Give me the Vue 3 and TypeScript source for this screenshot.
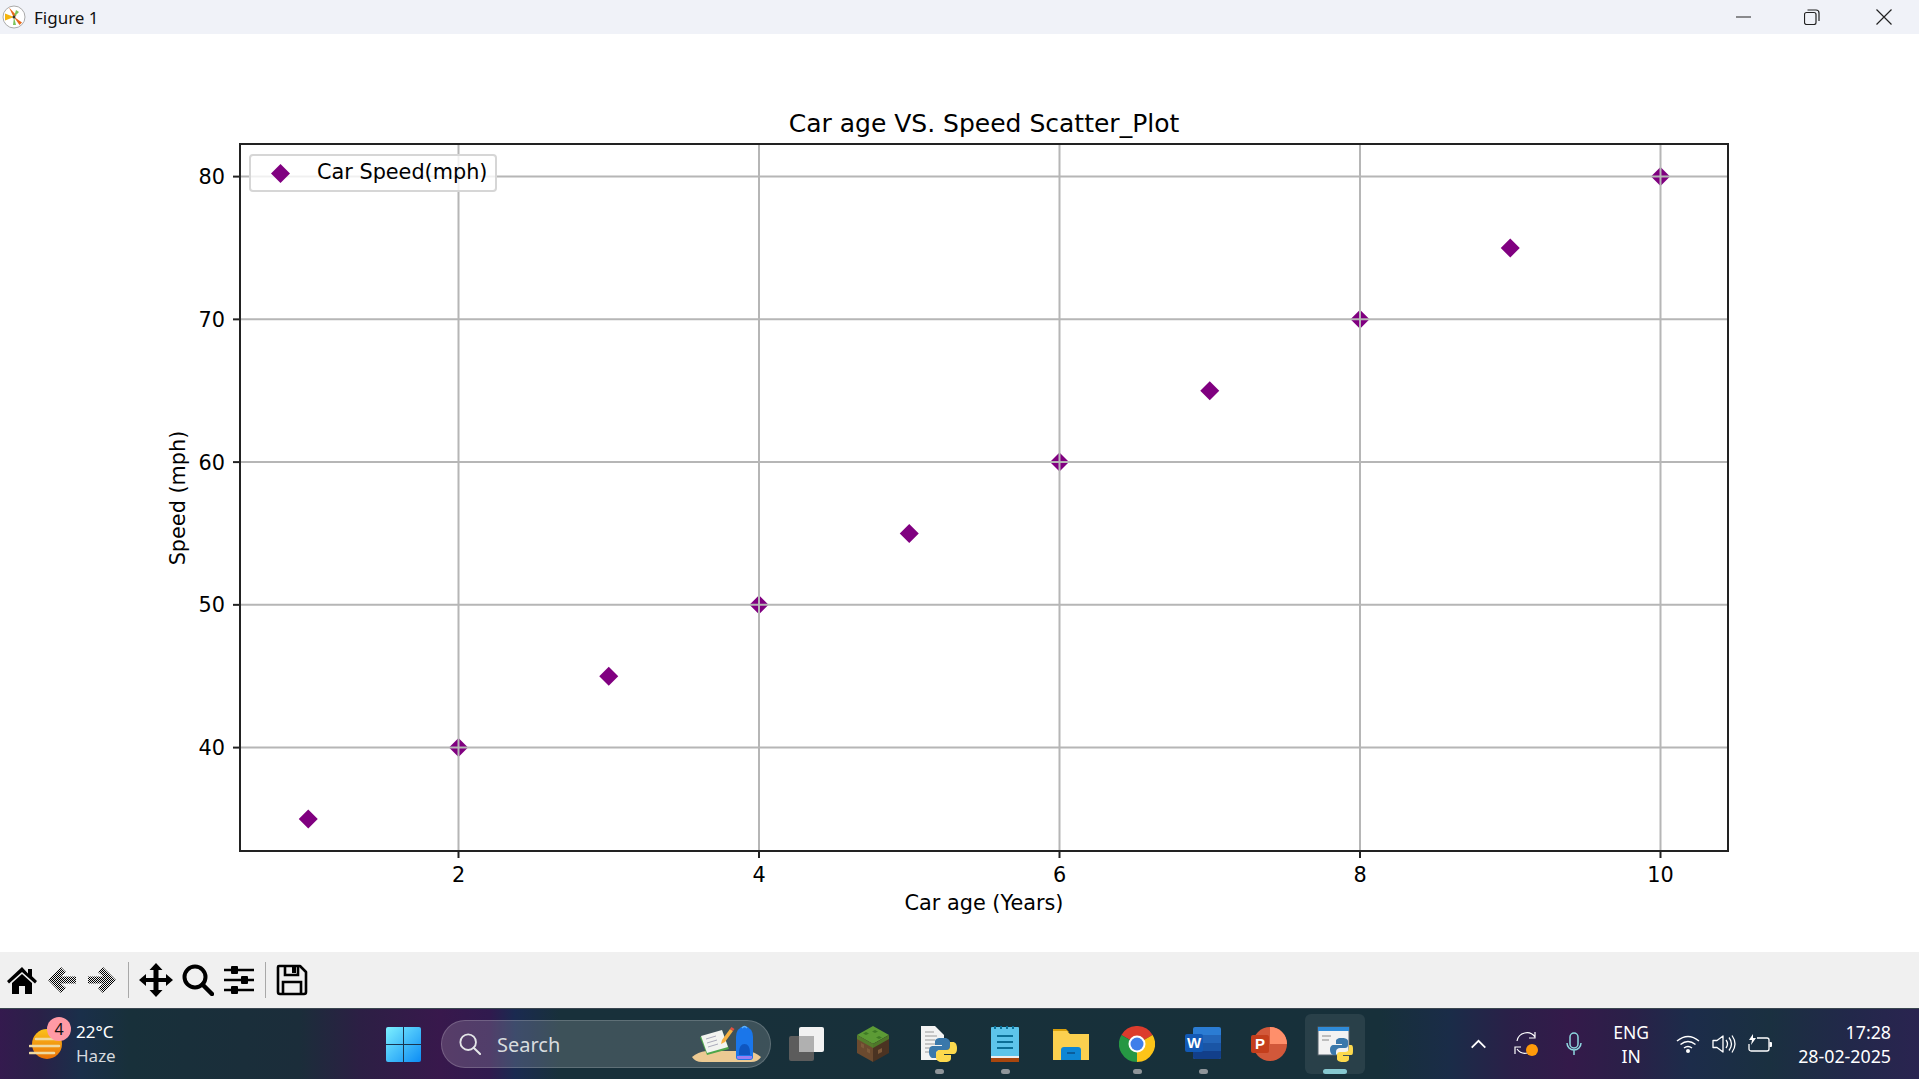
<script setup lang="ts">
interface Point {
  x: number
  y: number
}

const xLeft = 240
const xRight = 1728
const yTop = 144
const yBottom = 851

const xPos = (v: number) => 458.5 + (v - 2) * 150.25
const yPos = (v: number) => 747.6 - (v - 40) * 14.275

const points: Point[] = [
  { x: 1, y: 35 },
  { x: 2, y: 40 },
  { x: 3, y: 45 },
  { x: 4, y: 50 },
  { x: 5, y: 55 },
  { x: 6, y: 60 },
  { x: 7, y: 65 },
  { x: 8, y: 70 },
  { x: 9, y: 75 },
  { x: 10, y: 80 }
]
const xTicks = [2, 4, 6, 8, 10]
const yTicks = [40, 50, 60, 70, 80]

const diamond = (cx: number, cy: number, r = 9.5) =>
  `${cx - r},${cy} ${cx},${cy - r} ${cx + r},${cy} ${cx},${cy + r}`
</script>

<template>
  <div class="window">
    <header class="titlebar">
      <svg class="app-icon" viewBox="0 0 24 24">
        <circle cx="12" cy="12" r="11" fill="#fff" stroke="#aaa" />
        <path d="M7 2.500l4.500 9.500 3-1.500z" fill="#e8681a" />
        <path d="M11.500 11.500l6 8.500 2.500-2.500z" fill="#e8681a" />
        <path d="M3 8.500l9 3.500-9 3.500z" fill="#f5b50f" />
        <path d="M12 12l2-7 3 2zM12 12l-1 8 3 0z" fill="#7cc35a" />
        <circle cx="12" cy="12" r="1.500" fill="#333" />
      </svg>
      <span class="title-text">Figure 1</span>
      <div class="window-controls">
        <svg width="16" height="16" viewBox="0 0 16 16" class="ctl-min"><path d="M0 8h15" stroke="#222" stroke-width="1" /></svg>
        <svg width="16" height="16" viewBox="0 0 16 16" class="ctl-max">
          <rect x="0.5" y="3.5" width="11.5" height="12" rx="2" fill="none" stroke="#222" stroke-width="1.2" />
          <path d="M3.5 1h8.5a3 3 0 0 1 3 3v8" fill="none" stroke="#222" stroke-width="1.2" />
        </svg>
        <svg width="16" height="16" viewBox="0 0 16 16" class="ctl-close"><path d="M0.5 0.5l15 15M15.5 0.5l-15 15" stroke="#222" stroke-width="1.2" /></svg>
      </div>
    </header>

    <main class="figure">
      <svg class="plot" viewBox="0 34 1919 918">
        <text x="984" y="132" text-anchor="middle" class="plot-title">Car age VS. Speed Scatter_Plot</text>

        <polygon v-for="p in points" :key="p.x" :points="diamond(xPos(p.x), yPos(p.y))" fill="#800080" />

        <line v-for="t in xTicks" :key="'gx' + t" :x1="xPos(t)" :x2="xPos(t)" :y1="yTop" :y2="yBottom" class="grid" />
        <line v-for="t in yTicks" :key="'gy' + t" :x1="xLeft" :x2="xRight" :y1="yPos(t)" :y2="yPos(t)" class="grid" />

        <rect :x="xLeft" :y="yTop" :width="xRight - xLeft" :height="yBottom - yTop" class="frame" />

        <g v-for="t in xTicks" :key="'tx' + t">
          <line :x1="xPos(t)" :x2="xPos(t)" :y1="yBottom" :y2="yBottom + 7" class="tick" />
          <text :x="xPos(t)" :y="yBottom + 31" text-anchor="middle" class="tick-label">{{ t }}</text>
        </g>
        <g v-for="t in yTicks" :key="'ty' + t">
          <line :x1="xLeft - 7" :x2="xLeft" :y1="yPos(t)" :y2="yPos(t)" class="tick" />
          <text :x="xLeft - 15" :y="yPos(t) + 7.5" text-anchor="end" class="tick-label">{{ t }}</text>
        </g>

        <text x="984" y="910" text-anchor="middle" class="tick-label">Car age (Years)</text>
        <text transform="translate(185 498) rotate(-90)" text-anchor="middle" class="tick-label">Speed (mph)</text>

        <rect x="250" y="155" width="246" height="36" rx="3" class="legend-box" />
        <polygon :points="diamond(280.500, 173.500)" fill="#800080" />
        <text x="317" y="179" class="tick-label">Car Speed(mph)</text>
      </svg>
    </main>

    <nav class="toolbar">
      <svg class="tool" viewBox="0 0 32 32">
        <path d="M16 3L1 17l2 2.500L16 8l13 11.500 2-2.500-5-4.700V5h-4v4.500z" fill="#000" />
        <path d="M6 19l10-9 10 9v11h-7v-8h-6v8H6z" fill="#000" />
      </svg>
      <svg class="tool" viewBox="0 0 32 32">
        <defs>
          <pattern id="dither" width="2" height="2" patternUnits="userSpaceOnUse">
            <rect width="2" height="2" fill="#f0f0f0" />
            <rect width="1" height="1" fill="#000" />
            <rect x="1" y="1" width="1" height="1" fill="#000" />
          </pattern>
        </defs>
        <path d="M2 16L15 3l5 5-5 4.500h15v7H15l5 4.500-5 5z" fill="url(#dither)" />
      </svg>
      <svg class="tool" viewBox="0 0 32 32">
        <path d="M30 16L17 3l-5 5 5 4.500H2v7h15l-5 4.500 5 5z" fill="url(#dither)" />
      </svg>
      <span class="sep sep-first"></span>
      <div class="tool-group">
        <svg class="tool tool-move" viewBox="0 0 34 34">
          <path d="M17 0l6.500 7H19.500v8H27v-4l7 6-7 6v-4H19.500v8h4L17 34l-6.500-7h4v-8H7v4l-7-6 7-6v4h7.500V7h-4z" fill="#000" />
        </svg>
        <svg class="tool" viewBox="0 0 32 32">
          <circle cx="13" cy="13" r="10.500" fill="none" stroke="#000" stroke-width="4" />
          <path d="M20.500 20.500L30 30" stroke="#000" stroke-width="4.500" stroke-linecap="round" />
        </svg>
        <svg class="tool" viewBox="0 0 32 32">
          <path d="M1 6h30M1 16h30M1 26h30" stroke="#000" stroke-width="2.500" />
          <rect x="8" y="2" width="7" height="8" rx="1" fill="#000" />
          <rect x="18" y="12" width="7" height="8" rx="1" fill="#000" />
          <rect x="8" y="22" width="7" height="8" rx="1" fill="#000" />
        </svg>
      </div>
      <span class="sep"></span>
      <svg class="tool" viewBox="0 0 32 32">
        <path d="M3 2h21l6 6v20a2 2 0 0 1-2 2H4a2 2 0 0 1-2-2V3a1 1 0 0 1 1-1z" fill="none" stroke="#000" stroke-width="2.600" stroke-linejoin="round" />
        <path d="M9 2v9h13V2" fill="none" stroke="#000" stroke-width="2.600" />
        <rect x="16" y="3" width="4" height="6" fill="#000" />
        <path d="M7 30V18h18v12" fill="none" stroke="#000" stroke-width="2.600" />
      </svg>
    </nav>

    <footer class="taskbar">
      <div class="weather">
        <svg class="sun" viewBox="0 0 36 32">
          <defs>
            <linearGradient id="sunFill" x1="0" y1="0" x2="0" y2="1">
              <stop offset="0" stop-color="#fbc31b" />
              <stop offset="1" stop-color="#ea7007" />
            </linearGradient>
          </defs>
          <circle cx="18" cy="16" r="15" fill="url(#sunFill)" />
          <path d="M7 11h24M1 18h29M1 25h24" stroke="#efd9a2" stroke-width="2.600" stroke-linecap="round" />
        </svg>
        <span class="badge">4</span>
        <div class="weather-text">
          <span class="temp">22°C</span>
          <span class="haze">Haze</span>
        </div>
      </div>

      <svg class="start" viewBox="0 0 35 35">
        <defs>
          <linearGradient id="winFill" x1="0" y1="0" x2="1" y2="1">
            <stop offset="0" stop-color="#7df0ff" />
            <stop offset="1" stop-color="#0c8cf5" />
          </linearGradient>
        </defs>
        <rect width="35" height="35" rx="2" fill="url(#winFill)" />
        <path d="M17.500 0v35M0 17.500h35" stroke="#1a3550" stroke-width="1" />
      </svg>

      <div class="search">
        <svg class="search-icon" viewBox="0 0 24 24">
          <circle cx="10" cy="10" r="8.500" fill="none" stroke="#e4e6e8" stroke-width="2" />
          <path d="M16 16l7 7" stroke="#e4e6e8" stroke-width="2.200" stroke-linecap="round" />
        </svg>
        <span class="search-text">Search</span>
        <svg class="search-art" viewBox="0 0 70 38">
          <path d="M0 32q6-5 14-6h42q7 1 13 6-3 5-10 5H10q-7 0-10-5z" fill="#ecca93" />
          <path d="M8 12l22-6 7 18-22 6z" fill="#4da64a" />
          <path d="M9 11l21-6 6 17-21 6z" fill="#f2f3f0" />
          <path d="M14 14l10-3M15 18l10-3M16 22l10-3" stroke="#aab" stroke-width="1" />
          <path d="M30 15l8-11 3 2-8 11-4 2z" fill="#f5b042" />
          <path d="M38 4l1.500-2 3 2-1.500 2z" fill="#e2503f" />
          <path d="M44 12q0-9 8.500-11 8.500 2 8.500 11v20q0 3-3 3H47q-3 0-3-3z" fill="#1a76ea" />
          <path d="M47 28q0-9 5.500-9t5.500 9v2H47z" fill="#0f56c0" />
          <path d="M45 31h15v2q0 1-2 1H47q-2 0-2-1z" fill="#9a7ff0" />
          <path d="M50 3q2.500-3 5 0" fill="none" stroke="#5ab0ff" stroke-width="1.500" />
        </svg>
      </div>

      <div class="apps">
        <div class="app">
          <svg class="app-svg" viewBox="0 0 36 36">
            <rect x="0" y="10" width="25" height="25" rx="2" fill="#5c5c5c" />
            <rect x="10" y="1" width="25" height="25" rx="2" fill="#f2f2f2" />
            <rect x="10" y="10" width="15" height="16" fill="#b0b0b0" />
          </svg>
        </div>
        <div class="app">
          <svg class="app-svg" viewBox="0 0 36 36">
            <path d="M18 0l16 9-16 9-16-9z" fill="#5c9b35" />
            <path d="M2 9l16 9v18L2 27z" fill="#6b4a2f" />
            <path d="M34 9l-16 9v18l16-9z" fill="#4b3322" />
            <path d="M2 9l16 9 16-9v4l-16 9-16-9z" fill="#4f8a2c" opacity="0.8" />
            <path d="M11 6l3 1.500-3 1.500-3-1.500zM20 4l3 1.500-3 1.500-3-1.500zM24 10l3 1.500-3 1.500-3-1.500z" fill="#3f7a25" />
            <path d="M6 17l3 1.500v4l-3-1.500zM12 22l3 1.500v4l-3-1.500zM23 24l4-2v4l-4 2z" fill="#7d5a3a" />
          </svg>
        </div>
        <div class="app">
          <svg class="app-svg" viewBox="0 0 36 36">
            <path d="M0 0h14l9 9v25H0z" fill="#f3f3f3" />
            <path d="M4 6h9M4 10h12M4 14h10M4 18h10M4 22h8M4 26h8" stroke="#9a9a9a" stroke-width="1.200" />
            <path d="M20 12c-5 0-6 2-6 4v3h7v1h-9c-3 0-4 2-4 6s2 6 4 6h3v-4c0-3 2-4 4-4h6c2 0 4-1 4-4v-4c0-2-3-4-5-4z" fill="#3a78ab" />
            <path d="M24 36c5 0 6-2 6-4v-3h-7v-1h9c3 0 4-2 4-6s-2-6-4-6h-3v4c0 3-2 4-4 4h-6c-2 0-4 1-4 4v4c0 2 3 4 5 4z" fill="#fcd94d" />
          </svg>
          <span class="dot"></span>
        </div>
        <div class="app">
          <svg class="app-svg" viewBox="0 0 36 36">
            <rect x="4" y="1" width="28" height="31" rx="1" fill="#5dc4ea" />
            <path d="M4 32h28v4H4z" fill="#a8460d" />
            <path d="M4 30h28v2H4z" fill="#eee" />
            <path d="M10 10h16M10 16h16M10 22h16" stroke="#0b6f96" stroke-width="2" />
            <path d="M8 0v3M14 0v3M20 0v3M26 0v3" stroke="#0b6f96" stroke-width="2" />
          </svg>
          <span class="dot"></span>
        </div>
        <div class="app">
          <svg class="app-svg" viewBox="0 0 36 36">
            <path d="M0 3h13l3 3h-16z" fill="#d89f0b" />
            <path d="M0 5h14l3 3h19v26H0z" fill="#fbd04f" />
            <path d="M8 34V24q0-3 3-3h14q3 0 3 3v10z" fill="#0e86d4" />
            <path d="M14 27h8" stroke="#0a4f8a" stroke-width="1.500" />
          </svg>
        </div>
        <div class="app">
          <svg class="app-svg" viewBox="0 0 36 36">
            <path d="M18 18L2.400 9A18 18 0 0 1 33.600 9z" fill="#dc3c2d" />
            <path d="M18 18L33.600 9A18 18 0 0 1 18 36z" fill="#fcc419" />
            <path d="M18 18L18 36A18 18 0 0 1 2.400 9z" fill="#269743" />
            <circle cx="18" cy="18" r="8.500" fill="#fff" />
            <circle cx="18" cy="18" r="6.500" fill="#3f7fea" />
          </svg>
          <span class="dot"></span>
        </div>
        <div class="app">
          <svg class="app-svg" viewBox="0 0 36 36">
            <rect x="8" y="1" width="28" height="32" rx="2" fill="#2b7cd3" />
            <path d="M8 9h28v8H8z" fill="#2365b8" />
            <path d="M8 17h28v8H8z" fill="#1a55a5" />
            <path d="M8 25h28v6a2 2 0 0 1-2 2H10a2 2 0 0 1-2-2z" fill="#123f8a" />
            <rect x="0" y="8" width="18" height="18" rx="2" fill="#1259b5" />
            <text x="9" y="22" text-anchor="middle" class="app-letter">W</text>
          </svg>
          <span class="dot"></span>
        </div>
        <div class="app">
          <svg class="app-svg" viewBox="0 0 36 36">
            <circle cx="19" cy="18" r="17" fill="#d2583a" />
            <path d="M19 1a17 17 0 0 1 17 17H19z" fill="#ff8f6b" />
            <rect x="0" y="9" width="18" height="18" rx="2" fill="#c43e1c" />
            <text x="9" y="23" text-anchor="middle" class="app-letter">P</text>
          </svg>
        </div>
        <div class="app active">
          <svg class="app-svg" viewBox="0 0 36 36">
            <rect x="1" y="1" width="31" height="28" fill="#f2f2f2" stroke="#55606a" />
            <rect x="1" y="1" width="31" height="4" fill="#2f8bd8" />
            <path d="M5 10h9M5 14h7" stroke="#888" stroke-width="1.200" />
            <path d="M24 12c-4 0-5 2-5 3v3h6v1h-8c-3 0-4 2-4 5s2 5 4 5h2v-3c0-3 2-4 4-4h5c2 0 3-1 3-3v-4c0-2-3-3-5-3z" fill="#3a78ab" />
            <path d="M27 36c4 0 5-2 5-3v-3h-6v-1h8c2 0 2-2 2-5s0-5-2-5h-2v3c0 3-2 4-4 4h-5c-2 0-3 1-3 3v4c0 2 3 3 5 3z" fill="#fcd94d" />
          </svg>
          <span class="dot dot-active"></span>
        </div>
      </div>

      <div class="tray">
        <svg class="tray-chevron" viewBox="0 0 18 11"><path d="M1.500 9.500L9 2l7.500 7.500" fill="none" stroke="#fff" stroke-width="2" /></svg>
        <svg class="tray-sync" viewBox="0 0 24 24">
          <path d="M3 10A10 10 0 0 1 21 6M21 1v6h-6M21 14a10 10 0 0 1-18 4M1 23v-7h6" fill="none" stroke="#fff" stroke-width="1.200" transform="translate(0 -1)" />
          <circle cx="18" cy="18" r="6" fill="#ff9a0a" />
        </svg>
        <svg class="tray-mic" viewBox="0 0 16 24">
          <rect x="4" y="1" width="8" height="15" rx="4" fill="none" stroke="#8fd8e0" stroke-width="1.500" />
          <path d="M1 11a7 7 0 0 0 14 0M8 18v5" fill="none" stroke="#8fd8e0" stroke-width="1.500" />
        </svg>
        <div class="lang"><span>ENG</span><span>IN</span></div>
        <svg class="tray-wifi" viewBox="0 0 24 18">
          <path d="M1 6q11-9 22 0M4.500 9.500q7.500-6 15 0M8 13q4-3 8 0" fill="none" stroke="#fff" stroke-width="1.500" />
          <circle cx="12" cy="16" r="2" fill="#fff" />
        </svg>
        <svg class="tray-vol" viewBox="0 0 24 20">
          <path d="M1 6.500h4L11 2v16l-6-4.500H1z" fill="none" stroke="#fff" stroke-width="1.300" stroke-linejoin="round" />
          <path d="M14 6q3 4 0 8M17 3.500q5 6.500 0 13M20 1.500q6 8.500 0 17" fill="none" stroke="#fff" stroke-width="1.300" />
        </svg>
        <svg class="tray-batt" viewBox="0 0 24 20">
          <path d="M9 4h10a2 2 0 0 1 2 2v9a2 2 0 0 1-2 2H3a2 2 0 0 1-2-2v-5" fill="none" stroke="#fff" stroke-width="1.300" />
          <path d="M21.500 8h1.500a1 1 0 0 1 1 1v3a1 1 0 0 1-1 1h-1.500z" fill="#fff" />
          <path d="M5 0L1 6h3L3 11l5-7H5z" fill="#fff" />
        </svg>
        <div class="clock"><span>17:28</span><span>28-02-2025</span></div>
      </div>
    </footer>
  </div>
</template>

<style>
html,
body {
  margin: 0;
  background: #fff;
  overflow: hidden;
}
</style>

<style scoped>
.window {
  width: 1919px;
  height: 1079px;
  display: flex;
  flex-direction: column;
  font-family: "Noto Sans", "Open Sans", sans-serif;
  overflow: hidden;
}

.titlebar {
  height: 34px;
  flex: none;
  display: flex;
  align-items: center;
  background: #f0f2f8;
}

.app-icon {
  width: 24px;
  height: 24px;
  margin-left: 2px;
}

.title-text {
  margin-left: 8px;
  font-size: 17px;
  color: #111;
}

.window-controls {
  margin-left: auto;
  display: flex;
  align-items: center;
  padding-right: 27px;
}

.ctl-max {
  margin-left: 52px;
}

.ctl-close {
  margin-left: 56px;
}

.figure {
  flex: 1;
  background: #fff;
  min-height: 0;
}

.plot {
  display: block;
  width: 1919px;
  height: 918px;
}

.plot text {
  font-family: "DejaVu Sans", sans-serif;
  fill: #000;
}

.plot-title {
  font-size: 25px;
}

.tick-label {
  font-size: 20.800px;
}

.grid {
  stroke: #b6b6b6;
  stroke-width: 2;
}

.frame {
  fill: none;
  stroke: #222;
  stroke-width: 2;
}

.tick {
  stroke: #222;
  stroke-width: 2;
}

.legend-box {
  fill: #fff;
  fill-opacity: 0.8;
  stroke: #d6d6d6;
  stroke-width: 2;
}

.toolbar {
  height: 56px;
  flex: none;
  display: flex;
  align-items: center;
  gap: 8px;
  padding-left: 6px;
  background: #f0f0f0;
  box-sizing: border-box;
}

.tool {
  width: 32px;
  height: 32px;
  flex: none;
}

.tool-move {
  width: 34px;
  height: 34px;
  margin: 0 -1px;
}

.tool-group {
  display: flex;
  align-items: center;
  gap: 9.500px;
  margin-left: 1px;
}

.sep {
  width: 1px;
  height: 36px;
  margin: 0 2px;
  background: #a8a8a8;
}

.taskbar {
  height: 71px;
  flex: none;
  display: flex;
  align-items: center;
  position: relative;
  color: #fff;
  box-sizing: border-box;
  border-top: 1px solid #3a4650;
  background: linear-gradient(
    90deg,
    #341a4e 0,
    #2a2148 40px,
    #1a2f4a 80px,
    #18303a 130px,
    #1b2d3a 300px,
    #2c1f44 360px,
    #38184c 440px,
    #301a4e 490px,
    #1a2a50 515px,
    #18303a 560px,
    #17303a 1380px,
    #1a2c48 1450px,
    #2a2048 1510px,
    #341a4a 1570px,
    #2a2048 1630px,
    #1c2c4a 1690px,
    #1a3040 1770px,
    #22284a 1850px,
    #2a2450 1919px
  );
}

.weather {
  position: relative;
  display: flex;
  align-items: center;
  margin-left: 29px;
  width: 357px;
  flex: none;
}

.sun {
  width: 36px;
  height: 32px;
}

.badge {
  position: absolute;
  left: 18px;
  top: -3px;
  width: 24px;
  height: 24px;
  border-radius: 50%;
  background: #ff9aa5;
  color: #111;
  font-size: 16px;
  line-height: 24px;
  text-align: center;
}

.weather-text {
  margin-left: 11px;
  display: flex;
  flex-direction: column;
  font-size: 17px;
  line-height: 24px;
}

.haze {
  color: #d5d9de;
}

.start {
  width: 35px;
  height: 35px;
  flex: none;
}

.search {
  margin-left: 20px;
  width: 330px;
  height: 48px;
  flex: none;
  box-sizing: border-box;
  display: flex;
  align-items: center;
  padding-left: 17px;
  border-radius: 24px;
  background: rgba(255, 255, 255, 0.16);
  border: 1px solid rgba(255, 255, 255, 0.18);
}

.search-icon {
  width: 22px;
  height: 22px;
}

.search-text {
  margin-left: 16px;
  font-size: 20px;
  color: #d8dcde;
}

.search-art {
  margin-left: auto;
  margin-right: 8px;
  width: 70px;
  height: 40px;
}

.apps {
  display: flex;
  margin-left: 3px;
  flex: none;
}

.app {
  position: relative;
  width: 66px;
  height: 60px;
  display: flex;
  align-items: center;
  justify-content: center;
}

.app.active {
  background: rgba(255, 255, 255, 0.08);
  border-radius: 6px;
  width: 60px;
  margin-left: 3px;
}

.app-svg {
  width: 36px;
  height: 36px;
}

.app-letter {
  font-family: "Liberation Sans", sans-serif;
  font-weight: 700;
  font-size: 15px;
  fill: #fff;
}

.dot {
  position: absolute;
  bottom: 0;
  left: 50%;
  width: 9px;
  height: 5px;
  margin-left: -4.500px;
  border-radius: 3px;
  background: #8f959a;
}

.dot-active {
  width: 24px;
  margin-left: -12px;
  background: #86c8d0;
}

.tray {
  display: flex;
  align-items: center;
  margin-left: auto;
  padding-right: 28px;
}

.tray-chevron {
  width: 17px;
  height: 10px;
}

.tray-sync {
  width: 24px;
  height: 24px;
  margin-left: 27px;
}

.tray-mic {
  width: 16px;
  height: 24px;
  margin-left: 28px;
}

.lang {
  margin-left: 31px;
  width: 36px;
  display: flex;
  flex-direction: column;
  align-items: center;
  font-size: 17.500px;
  line-height: 24px;
}

.tray-wifi {
  width: 24px;
  height: 18px;
  margin-left: 27px;
}

.tray-vol {
  width: 24px;
  height: 20px;
  margin-left: 12px;
}

.tray-batt {
  width: 24px;
  height: 20px;
  margin-left: 12px;
}

.clock {
  margin-left: auto;
  padding-left: 26px;
  display: flex;
  flex-direction: column;
  align-items: flex-end;
  font-size: 17.800px;
  line-height: 24px;
}
</style>
